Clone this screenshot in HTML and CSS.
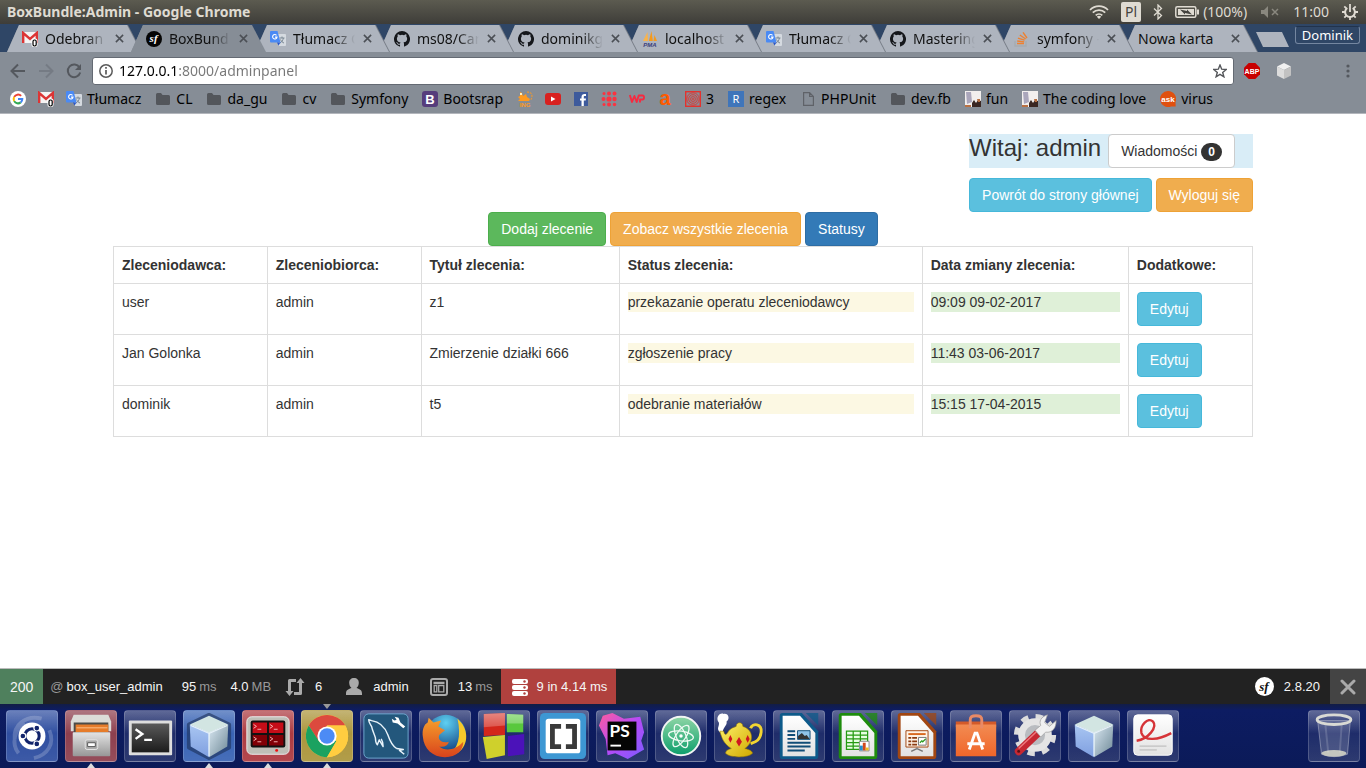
FILE: index.html
```html
<!DOCTYPE html>
<html lang="pl">
<head>
<meta charset="utf-8">
<title>BoxBundle:Admin</title>
<link rel="stylesheet" href="styles.css">
</head>
<body>
<svg class="defs" aria-hidden="true">
  <defs>
    <linearGradient id="gloss" x1="0" y1="0" x2="0" y2="1"><stop offset="0" stop-color="#fff" stop-opacity=".45"/><stop offset="1" stop-color="#fff" stop-opacity="0"/></linearGradient>
    <linearGradient id="metal" x1="0" y1="0" x2="0" y2="1"><stop offset="0" stop-color="#e4e4e4"/><stop offset="1" stop-color="#979797"/></linearGradient>
    <linearGradient id="dark" x1="0" y1="0" x2="0" y2="1"><stop offset="0" stop-color="#5a5a5a"/><stop offset="1" stop-color="#1c1c1c"/></linearGradient>
    <linearGradient id="gold" x1="0" y1="0" x2="1" y2="1"><stop offset="0" stop-color="#fff36a"/><stop offset="1" stop-color="#d0a800"/></linearGradient>
    <linearGradient id="paper" x1="0" y1="0" x2="0" y2="1"><stop offset="0" stop-color="#fff"/><stop offset="1" stop-color="#e2e2e2"/></linearGradient>
    <linearGradient id="atomg" x1="0" y1="0" x2="0" y2="1"><stop offset="0" stop-color="#8ed6a5"/><stop offset="1" stop-color="#0c9e6b"/></linearGradient>
    <linearGradient id="cubeL" x1="0" y1="0" x2="0" y2="1"><stop offset="0" stop-color="#a9c6f2"/><stop offset="1" stop-color="#7f9fe0"/></linearGradient>
    <linearGradient id="cubeR" x1="0" y1="0" x2="1" y2="1"><stop offset="0" stop-color="#dbe9f3"/><stop offset="1" stop-color="#6c8795"/></linearGradient>
    <linearGradient id="ps" x1="0" y1="0" x2="1" y2="1"><stop offset="0" stop-color="#ff5c9c"/><stop offset=".5" stop-color="#b74af7"/><stop offset="1" stop-color="#7b5cff"/></linearGradient>
    <linearGradient id="fox" x1="0" y1="0" x2="0" y2="1"><stop offset="0" stop-color="#f6a12c"/><stop offset="1" stop-color="#d9431c"/></linearGradient>
    <radialGradient id="globe" cx=".5" cy=".2" r=".8"><stop offset="0" stop-color="#5ed0f2"/><stop offset="1" stop-color="#0b3578"/></radialGradient>
    <linearGradient id="bag" x1="0" y1="0" x2="0" y2="1"><stop offset="0" stop-color="#f28b52"/><stop offset="1" stop-color="#f0662a"/></linearGradient>
    <symbol id="i-gmail" viewBox="0 0 16 16"><path fill="#f4f4f4" d="M0 1h16v11H0z"/><path fill="none" stroke="#dc3535" stroke-width="2.4" d="M1.2 12V2l6.8 6 6.8-6v10"/><rect x="9.5" y="7.5" width="6" height="8.5" rx="2" fill="#fff"/><rect x="11" y="9" width="3.2" height="6" rx="1.4" fill="none" stroke="#000" stroke-width="1.2"/></symbol>
    <symbol id="i-sf" viewBox="0 0 16 16"><circle cx="8" cy="8" r="8" fill="#050505"/><text x="7.6" y="11.4" text-anchor="middle" class="sf-mark" fill="#fff">sf</text></symbol>
    <symbol id="i-tr" viewBox="0 0 16 16"><path fill="#d5dae0" d="M7 3h8a1 1 0 0 1 1 1v10a1 1 0 0 1-1 1H9z"/><path fill="none" stroke="#7b8894" d="M9.5 7h5M12 5.5V7M10 12c2-1 3-3 3.400-5M10.500 8.500c1 2 2 3 3.500 3.500"/><path fill="#4a8af4" d="M1 0h6.500l3 11.500H1a1 1 0 0 1-1-1V1a1 1 0 0 1 1-1z"/><path fill="#2956c8" d="M7 11.500h3.500L8.500 14.500z"/><path fill="none" stroke="#fff" stroke-width="1.100" d="M6.500 4.300a2.200 2.200 0 1 0 .5 1.800H5"/></symbol>
    <symbol id="i-gh" viewBox="0 0 16 16"><path fill="#15171b" d="M8 0a8 8 0 0 0-2.530 15.590c.4.070.550-.170.550-.380v-1.490c-2.230.480-2.700-.950-2.700-.950-.360-.920-.890-1.170-.890-1.170-.730-.5.050-.490.050-.490.810.060 1.230.830 1.230.830.720 1.230 1.880.870 2.340.670.070-.520.280-.880.510-1.080-1.780-.2-3.640-.890-3.640-3.950 0-.870.310-1.590.820-2.150-.080-.2-.360-1.020.080-2.120 0 0 .670-.210 2.200.820a7.600 7.600 0 0 1 4 0c1.530-1.040 2.200-.820 2.200-.820.440 1.100.160 1.920.080 2.120.510.560.820 1.270.820 2.150 0 3.070-1.870 3.750-3.650 3.950.290.250.540.730.540 1.480v2.200c0 .210.150.460.550.380A8 8 0 0 0 8 0z"/></symbol>
    <symbol id="i-pma" viewBox="0 0 16 16"><path fill="#f9b34c" d="M5.500 1 1 10h5z"/><path fill="#f59a1c" d="M9.500 0 6.800 10h4zM12.500 4l-1 6H15z"/><text x="8" y="15.500" text-anchor="middle" class="pma-mark" fill="#3b3d7a">PMA</text></symbol>
    <symbol id="i-so" viewBox="0 0 16 16"><path fill="none" stroke="#a6abb0" stroke-width="1.300" d="M1 10v5h11v-5"/><path fill="none" stroke="#ee8130" stroke-width="1.400" d="M3 12.500h7M3.200 10l7 .9M3.900 7.100l6.700 2.100M5.800 4l5.900 4M9 1.300l4 5.700"/></symbol>
    <symbol id="i-folder" viewBox="0 0 16 16"><path fill="#53565b" d="M1 3.500A1.500 1.500 0 0 1 2.500 2H6l1.500 2h6A1.500 1.500 0 0 1 15 5.500v7a1.500 1.500 0 0 1-1.500 1.500h-11A1.500 1.500 0 0 1 1 12.500z"/></symbol>
    <symbol id="i-photo" viewBox="0 0 16 16"><path fill="#f2efee" d="M0 0h16v16H0z"/><path fill="#aaa6bb" d="M1 1h5l1 10-5 2z"/><path fill="#3a2723" d="M7 12l2-3 2 3 2-3 3 1v6H7z"/><path fill="#b97042" d="M0 14h6v2H0zM12 8h3v3h-2z"/></symbol>
    <symbol id="i-cube" viewBox="0 0 52 52"><path fill="#d2e5e2" d="M26 5 46 14 26 23 6 14z"/><path fill="url(#cubeL)" d="M6 14l20 9v25L7 37z"/><path fill="url(#cubeR)" d="M46 14 26 23v25l19-11z"/><path fill="none" stroke="#f3fbff" stroke-width="1.500" opacity=".8" d="M7 15l19 8 19-8M26 23v24"/></symbol>
    <symbol id="i-doc" viewBox="0 0 52 52"><path fill="currentColor" d="M9 2h20l17 19v26a3 3 0 0 1-3 3H9a3 3 0 0 1-3-3V5a3 3 0 0 1 3-3z"/><path fill="currentColor" opacity=".75" d="M33 2h13v13z"/><path fill="url(#paper)" d="M9 5h18l16 18v24H9z"/></symbol>
    <symbol id="i-close" viewBox="0 0 10 10"><path d="M1 1l8 8M9 1L1 9" stroke="#4b4f55" stroke-width="1.700" fill="none"/></symbol>
  </defs>
</svg>

<header class="titlebar">
  <span class="window-title">BoxBundle:Admin - Google Chrome</span>
  <div class="tray">
    <svg class="wifi" width="20" height="16" viewBox="0 0 20 16" fill="none" stroke="#dfdbd2" stroke-width="1.700"><path d="M1 6a12.500 12.500 0 0 1 18 0M3.800 8.700a8.600 8.600 0 0 1 12.400 0M6.700 11.300a4.800 4.800 0 0 1 6.600 0"/><path fill="#dfdbd2" stroke="none" d="M10 15l-2.200-2.300a3.200 3.200 0 0 1 4.400 0z"/></svg>
    <span class="layout">Pl</span>
    <svg class="bt" width="10" height="16" viewBox="0 0 10 16" fill="none" stroke="#dfdbd2" stroke-width="1.300"><path d="M1 4.500l7.500 7L5 15V1l3.500 3.500-7.500 7"/></svg>
    <svg class="battery" width="24" height="12" viewBox="0 0 24 12"><rect x=".8" y=".8" width="20" height="10.400" rx="1.500" fill="none" stroke="#dfdbd2" stroke-width="1.500"/><path fill="#dfdbd2" d="M3 3h16v6H3zM22 3.500h2v5h-2z"/><path fill="#44433e" d="M5 3.500l7 1.500v-1.500l5 5-7-1.500v1.500z"/></svg>
    <span class="percent">(100%)</span>
    <svg class="mute" width="18" height="12" viewBox="0 0 18 12"><path fill="#8a887f" d="M0 4h3l4-4v12L3 8H0z"/><path stroke="#8a887f" stroke-width="1.500" d="M11 3l6 6M17 3l-6 6"/></svg>
    <span class="clock">11:00</span>
    <svg class="power" width="16" height="16" viewBox="0 0 16 16" fill="none" stroke="#dfdbd2"><path stroke-width="2" d="M5.300 4a4.900 4.900 0 1 0 5.400 0"/><path stroke-width="1.800" d="M8 0v8M8 13v3M0 8h3M13 8h3M2.300 13.700l2-2M13.700 13.700l-2-2M2.300 2.300l2 2M13.700 2.300l-2 2"/></svg>
  </div>
</header>

<nav class="tabs" aria-label="Karty">
  <div class="tab"><svg class="ico"><use href="#i-gmail"/></svg><span class="tab-title">Odebran</span><button class="close" aria-label="Zamknij"><svg><use href="#i-close"/></svg></button></div>
  <div class="tab active"><svg class="ico"><use href="#i-sf"/></svg><span class="tab-title">BoxBund</span><button class="close" aria-label="Zamknij"><svg><use href="#i-close"/></svg></button></div>
  <div class="tab"><svg class="ico"><use href="#i-tr"/></svg><span class="tab-title">Tłumacz G</span><button class="close" aria-label="Zamknij"><svg><use href="#i-close"/></svg></button></div>
  <div class="tab"><svg class="ico"><use href="#i-gh"/></svg><span class="tab-title">ms08/Car</span><button class="close" aria-label="Zamknij"><svg><use href="#i-close"/></svg></button></div>
  <div class="tab"><svg class="ico"><use href="#i-gh"/></svg><span class="tab-title">dominikg</span><button class="close" aria-label="Zamknij"><svg><use href="#i-close"/></svg></button></div>
  <div class="tab"><svg class="ico"><use href="#i-pma"/></svg><span class="tab-title">localhost</span><button class="close" aria-label="Zamknij"><svg><use href="#i-close"/></svg></button></div>
  <div class="tab"><svg class="ico"><use href="#i-tr"/></svg><span class="tab-title">Tłumacz G</span><button class="close" aria-label="Zamknij"><svg><use href="#i-close"/></svg></button></div>
  <div class="tab"><svg class="ico"><use href="#i-gh"/></svg><span class="tab-title">Mastering</span><button class="close" aria-label="Zamknij"><svg><use href="#i-close"/></svg></button></div>
  <div class="tab"><svg class="ico"><use href="#i-so"/></svg><span class="tab-title">symfony -</span><button class="close" aria-label="Zamknij"><svg><use href="#i-close"/></svg></button></div>
  <div class="tab"><span class="tab-title full">Nowa karta</span><button class="close" aria-label="Zamknij"><svg><use href="#i-close"/></svg></button></div>
  <button class="new-tab" aria-label="Nowa karta"></button>
  <button class="profile">Dominik</button>
</nav>

<div class="toolbar">
  <button class="nav-btn" aria-label="Wstecz"><svg width="16" height="16" viewBox="0 0 16 16" fill="none" stroke="#54585e" stroke-width="2"><path d="M15 8H2M8 1.500L1.500 8 8 14.500"/></svg></button>
  <button class="nav-btn" aria-label="Dalej"><svg width="16" height="16" viewBox="0 0 16 16" fill="none" stroke="#757b84" stroke-width="2"><path d="M1 8h13M8 1.500L14.500 8 8 14.500"/></svg></button>
  <button class="nav-btn" aria-label="Odśwież"><svg width="16" height="16" viewBox="0 0 16 16"><path fill="none" stroke="#54585e" stroke-width="2" d="M13.500 4.500A6.300 6.300 0 1 0 14.200 9.500"/><path fill="#54585e" d="M15 1v6H9z"/></svg></button>
  <div class="omnibox">
    <svg width="14" height="14" viewBox="0 0 14 14"><circle cx="7" cy="7" r="6.200" fill="none" stroke="#5b5b5b" stroke-width="1.500"/><path stroke="#5b5b5b" stroke-width="1.700" d="M7 6v4.500M7 3v1.800"/></svg>
    <input class="address" type="text" aria-label="Adres" value="127.0.0.1:8000/adminpanel">
    <svg width="14" height="14" viewBox="0 0 14 14" fill="none" stroke="#54565a" stroke-width="1.400"><path d="M7 1l1.700 4.200 4.500.3-3.500 2.900 1.200 4.400L7 10.400l-3.900 2.400 1.200-4.400L.8 5.500l4.500-.3z"/></svg>
  </div>
  <div class="extensions">
    <svg width="16" height="16" viewBox="0 0 16 16"><path fill="#c80000" d="M4.700 0h6.600L16 4.700v6.600L11.300 16H4.700L0 11.300V4.700z"/><text x="8" y="10.700" text-anchor="middle" class="abp-mark" fill="#fff">ABP</text></svg>
    <svg width="16" height="16" viewBox="0 0 16 16"><path fill="#f0f0f0" d="M8 0l7 3.500L8 7 1 3.500z"/><path fill="#dcdcdc" d="M1 3.500L8 7v9l-7-3.500z"/><path fill="#c2c2c2" d="M15 3.500L8 7v9l7-3.500z"/></svg>
  </div>
  <button class="menu-btn" aria-label="Menu"><svg width="4" height="14" viewBox="0 0 4 14" fill="#54585e"><circle cx="2" cy="2" r="1.600"/><circle cx="2" cy="7" r="1.600"/><circle cx="2" cy="12" r="1.600"/></svg></button>
</div>

<nav class="bookmarks" aria-label="Zakładki">
  <a href="#" aria-label="Google"><svg class="ico" viewBox="0 0 16 16"><circle cx="8" cy="8" r="8" fill="#fff"/><g fill="none" stroke-width="2"><path stroke="#ea4335" d="M4.200 5.900a4.300 4.300 0 0 1 6.900-1"/><path stroke="#fbbc05" d="M4.200 5.900a4.300 4.300 0 0 0 0 4.200"/><path stroke="#34a853" d="M4.200 10.100a4.300 4.300 0 0 0 6.500 1.300"/><path stroke="#4285f4" d="M10.700 11.400A4.300 4.300 0 0 0 12.300 8H8"/></g></svg></a>
  <a href="#" aria-label="Gmail"><svg class="ico"><use href="#i-gmail"/></svg></a>
  <a class="named" href="#"><svg class="ico"><use href="#i-tr"/></svg>Tłumacz</a>
  <a class="named" href="#"><svg class="ico"><use href="#i-folder"/></svg>CL</a>
  <a class="named" href="#"><svg class="ico"><use href="#i-folder"/></svg>da_gu</a>
  <a class="named" href="#"><svg class="ico"><use href="#i-folder"/></svg>cv</a>
  <a class="named" href="#"><svg class="ico"><use href="#i-folder"/></svg>Symfony</a>
  <a class="named" href="#"><svg class="ico" viewBox="0 0 16 16"><rect width="16" height="16" rx="3" fill="#563d7c"/><text x="8" y="12.500" text-anchor="middle" class="mark-bold" fill="#fff">B</text></svg>Bootsrap</a>
  <a href="#" aria-label="ING"><svg class="ico" viewBox="0 0 16 16"><path fill="#ff9a1f" d="M3 1l2 1 1 3 3-2 1 3 3 2-1 2H1l2-2-2-2 2-1z"/><path fill="none" stroke="#ff9a1f" stroke-dasharray="2 1" d="M10 1c4 0 5 2 5 4s-1 3-1 4"/><path fill="#fff0c0" d="M3 2h2v2H3z"/><text x="8" y="15.800" text-anchor="middle" class="tiny-mark" fill="#ff9a1f">ING</text></svg></a>
  <a href="#" aria-label="YouTube"><svg class="ico" viewBox="0 0 16 16"><rect y="2" width="16" height="12" rx="3" fill="#d8201f"/><path fill="#fff" d="M6 5.500v5L10.500 8z"/></svg></a>
  <a href="#" aria-label="Facebook"><svg class="ico" viewBox="0 0 16 16"><rect x="1" y="1" width="14" height="14" fill="#3d5a9c"/><path fill="#fff" d="M8.500 15V9.500H7v-2h1.500V6c0-2 1.200-3 3-3H13v2h-1.200c-.8 0-1 .4-1 1v1.500H13l-.3 2h-1.900V15z"/></svg></a>
  <a href="#" aria-label="Kropki"><svg class="ico" viewBox="0 0 16 16" fill="#fb3340"><circle cx="3" cy="2.500" r="1.500"/><circle cx="8" cy="2.500" r="2"/><circle cx="13.500" cy="2.500" r="2"/><circle cx="2.500" cy="8" r="2"/><circle cx="8" cy="8" r="2.600"/><circle cx="13.500" cy="8" r="2.200"/><circle cx="3" cy="13.500" r="1.500"/><circle cx="8" cy="13.500" r="2"/><circle cx="13.500" cy="13.500" r="1.700"/></svg></a>
  <a href="#" aria-label="WP"><svg class="ico" viewBox="0 0 16 16" fill="none" stroke="#f7293f" stroke-width="1.900" stroke-linejoin="round"><path d="M.8 4l2.200 7 2.400-6 2.300 6 2-6.500h3.800c2 0 2 4 0 4H11v3"/></svg></a>
  <a href="#" aria-label="Allegro"><svg class="ico" viewBox="0 0 16 16"><text x="8" y="14" text-anchor="middle" class="a-mark" fill="#ff5a00">a</text></svg></a>
  <a class="named" href="#"><svg class="ico" viewBox="0 0 16 16" fill="none" stroke="#e3322e" stroke-width=".9"><rect x=".7" y=".7" width="14.600" height="14.600" stroke-width="1.400"/><circle cx="8" cy="8" r="6.200"/><circle cx="8" cy="8" r="4.300"/><circle cx="8" cy="8" r="2.400"/><circle cx="8" cy="8" r=".6"/></svg>3</a>
  <a class="named" href="#"><svg class="ico" viewBox="0 0 16 16"><rect width="16" height="16" fill="#3f75ba"/><text x="8" y="12" text-anchor="middle" class="mark-light" fill="#fff">R</text></svg>regex</a>
  <a class="named" href="#"><svg class="ico" viewBox="0 0 16 16" fill="none" stroke="#5f6268" stroke-width="1.200"><path d="M3.600 1.600h6l3.800 3.800v9H3.600zM9.600 1.600v3.800h3.800"/></svg>PHPUnit</a>
  <a class="named" href="#"><svg class="ico"><use href="#i-folder"/></svg>dev.fb</a>
  <a class="named" href="#"><svg class="ico"><use href="#i-photo"/></svg>fun</a>
  <a class="named" href="#"><svg class="ico"><use href="#i-photo"/></svg>The coding love</a>
  <a class="named" href="#"><svg class="ico" viewBox="0 0 16 16"><path fill="#e0500f" d="M8 0a8 8 0 0 1 7.500 11l.2 4.500-4.700-.1A8 8 0 1 1 8 0z"/><text x="8" y="10.500" text-anchor="middle" class="ask-mark" fill="#fff">ask</text></svg>virus</a>
</nav>

<main class="page">
  <div class="container">
    <div class="user-row">
      <div class="user-box">
        <div class="greeting">Witaj: admin <a class="btn btn-default" href="#">Wiadomości <span class="badge">0</span></a></div>
        <div class="user-actions"><a class="btn btn-info" href="#">Powrót do strony głównej</a> <a class="btn btn-warning" href="#">Wyloguj się</a></div>
      </div>
    </div>
    <div class="actions">
      <a class="btn btn-success" href="#">Dodaj zlecenie</a>
      <a class="btn btn-warning" href="#">Zobacz wszystkie zlecenia</a>
      <a class="btn btn-primary" href="#">Statusy</a>
    </div>
    <table class="orders">
      <colgroup><col class="c-from"><col class="c-to"><col class="c-title"><col class="c-status"><col class="c-date"><col class="c-extra"></colgroup>
      <thead>
        <tr><th>Zleceniodawca:</th><th>Zleceniobiorca:</th><th>Tytuł zlecenia:</th><th>Status zlecenia:</th><th>Data zmiany zlecenia:</th><th>Dodatkowe:</th></tr>
      </thead>
      <tbody>
        <tr><td>user</td><td>admin</td><td>z1</td><td><p class="bg-warning">przekazanie operatu zleceniodawcy</p></td><td><p class="bg-success">09:09 09-02-2017</p></td><td><a class="btn btn-info" href="#">Edytuj</a></td></tr>
        <tr><td>Jan Golonka</td><td>admin</td><td>Zmierzenie działki 666</td><td><p class="bg-warning">zgłoszenie pracy</p></td><td><p class="bg-success">11:43 03-06-2017</p></td><td><a class="btn btn-info" href="#">Edytuj</a></td></tr>
        <tr><td>dominik</td><td>admin</td><td>t5</td><td><p class="bg-warning">odebranie materiałów</p></td><td><p class="bg-success">15:15 17-04-2015</p></td><td><a class="btn btn-info" href="#">Edytuj</a></td></tr>
      </tbody>
    </table>
  </div>
</main>

<footer class="debugbar">
  <a class="dbg status" href="#">200</a>
  <a class="dbg route" href="#"><i>@</i> box_user_admin</a>
  <a class="dbg time" href="#">95 <i>ms</i></a>
  <a class="dbg memory" href="#">4.0 <i>MB</i></a>
  <a class="dbg ajax" href="#"><svg width="20" height="20" viewBox="0 0 20 20"><path fill="none" stroke="#aaa" stroke-width="3" stroke-linejoin="round" d="M11 3.500H4.500V15M9 16.500h6.500V5"/><path fill="#aaa" d="M.5 14h8l-4 5zM11.500 6h8l-4-5z"/></svg>6</a>
  <a class="dbg user" href="#"><svg width="20" height="20" viewBox="0 0 20 20" fill="#aaa"><path d="M10 1c3 0 5 2 4.800 5-.1 2-1 4-2.300 5 2.500 1 5.500 1.500 5.500 5.500V18H2v-1.500C2 12.500 5 12 7.500 11c-1.300-1-2.200-3-2.300-5C5 3 7 1 10 1z"/></svg>admin</a>
  <a class="dbg twig" href="#"><svg width="20" height="20" viewBox="0 0 20 20" fill="none" stroke="#aaa"><rect x="2" y="2" width="16" height="16" rx="2" stroke-width="2"/><path stroke-width="2.500" d="M4.500 6h11"/><path stroke-width="1.300" d="M5.200 8.700h2.600v6.100H5.200zM9.700 8.700h5.100v6.100H9.700z"/></svg>13 <i>ms</i></a>
  <a class="dbg db" href="#"><svg width="18" height="18" viewBox="0 0 18 18"><g fill="#fff"><rect x="1" y="1" width="16" height="5" rx="2"/><rect x="1" y="7" width="16" height="5" rx="2"/><rect x="1" y="13" width="16" height="5" rx="2"/></g><g fill="#b0413e"><circle cx="13.500" cy="3.500" r="1.200"/><circle cx="13.500" cy="9.500" r="1.200"/><circle cx="13.500" cy="15.500" r="1.200"/></g></svg>9 in 4.14 ms</a>
  <a class="dbg version" href="#"><svg width="19" height="19" viewBox="0 0 16 16"><circle cx="8" cy="8" r="8" fill="#fff"/><text x="7.600" y="11.400" text-anchor="middle" class="sf-mark" fill="#111">sf</text></svg>2.8.20</a>
  <button class="hide-bar" aria-label="Zamknij pasek"><svg width="16" height="16" viewBox="0 0 16 16"><path d="M2 2l12 12M14 2L2 14" stroke="#aaa" stroke-width="3" stroke-linecap="round"/></svg></button>
</footer>

<nav class="dock" aria-label="Programy">
  <button class="app blue" aria-label="Ubuntu"><svg viewBox="0 0 52 52"><g fill="none" stroke="#fff" stroke-width="4" opacity=".2"><path d="M8 30C6 14 20 4 36 8M44 20c6 14-2 26-16 29M12 44C4 34 8 20 18 12"/></g><circle cx="26" cy="26" r="14" fill="#fff"/><circle cx="26" cy="26" r="7.500" fill="none" stroke="#12246b" stroke-width="3.200"/><g fill="#12246b" stroke="#fff" stroke-width="1.200"><circle cx="16.500" cy="26" r="3"/><circle cx="31" cy="17.800" r="3"/><circle cx="31" cy="34.200" r="3"/></g></svg></button>
  <button class="app red running" aria-label="Pliki"><svg viewBox="0 0 52 52"><path fill="#dcdcd8" d="M8 4h36l3 7v10H5V11z"/><path fill="#4c4c48" d="M8 12h36v12H8z"/><path fill="#e67c2a" d="M10 14h34v8H10z"/><path fill="#ffc28a" d="M11 17h32v1H11z"/><rect x="7" y="22" width="39" height="25" rx="1" fill="url(#metal)"/><rect x="20" y="30" width="13" height="10" rx="2" fill="#aaa" stroke="#e8e8e8"/><path fill="#fff" stroke="#555" d="M22.500 33h8v4h-8z"/></svg></button>
  <button class="app" aria-label="Terminal"><svg viewBox="0 0 52 52"><rect x="4" y="10" width="45" height="36" rx="1" fill="#dedede"/><rect x="7" y="13" width="39" height="30" fill="url(#dark)"/><path fill="none" stroke="#fff" stroke-width="2.500" d="M11 19l7 5-7 5M20 30h8"/></svg></button>
  <button class="app azure running" aria-label="VirtualBox"><svg viewBox="0 0 52 52"><path fill="#1c3058" stroke="#1c3058" stroke-width="4" stroke-linejoin="round" opacity=".6" d="M26 4 47 14v24L26 49 5 38V14z"/><use href="#i-cube"/></svg></button>
  <button class="app crimson running" aria-label="Terminator"><svg viewBox="0 0 52 52"><rect x="4" y="6" width="44" height="39" rx="5" fill="#bfbfb7" stroke="#eee"/><rect x="8" y="10" width="36" height="28" rx="2" fill="#111"/><path fill="#c60d18" d="M10 12h15v11H10zM27 12h15v11H27z"/><path fill="#810006" d="M10 25h15v11H10zM27 25h15v11H27z"/><path fill="none" stroke="#f5b3b3" d="M11 14l3 2-3 2M15 19h4M28 14l3 2-3 2M32 19h4M11 27l3 2-3 2M15 32h4M28 27l3 2-3 2M32 32h4"/><circle cx="35" cy="41" r="1.500" fill="#e11"/></svg></button>
  <button class="app yellow running current" aria-label="Chrome"><svg viewBox="0 0 52 52"><circle cx="26" cy="26" r="22" fill="#ffcd40"/><path fill="#dc4a3e" d="M45 15A22 22 0 0 0 7 15l10 16 9-16z"/><path fill="#1ba260" d="M7 15a22 22 0 0 0 19 33l10-17-18 1z"/><path fill="#ffcd40" d="M45 15H26l10 16-10 17a22 22 0 0 0 19-33z"/><circle cx="26" cy="26" r="10" fill="#fff"/><circle cx="26" cy="26" r="8" fill="#4c8bf5"/></svg></button>
  <button class="app" aria-label="MySQL Workbench"><svg viewBox="0 0 52 52"><rect x="3" y="3" width="46" height="46" rx="5" fill="#23577c" stroke="#6faad0"/><path fill="none" stroke="#e8f3fa" stroke-width="1.500" stroke-linejoin="round" d="M37 39c-5-3-7-8-9-14-3-8-9-14-17-15l-3-1c0 3 2 5 3 7 1 5 3 8 4 12 0 3 0 5 2 7l2-5 4 7c0-3 0-5-2-8M37 39l7 1-4 1 5 4"/><path fill="#fff" d="M35 6l4 1 2 5 5 4-2 2-6-5-5-1-1-4 3 2 2-1z"/></svg></button>
  <button class="app" aria-label="Firefox"><svg viewBox="0 0 52 52"><circle cx="27" cy="25" r="21" fill="url(#globe)"/><path fill="#f8c92b" d="M39 8c12 10 12 27 1 35-4 3-9 4-12 4 12-7 15-21 11-39z"/><path fill="url(#fox)" d="M3 27C2 20 4 14 8 12l1-5 5 5 8-2-3 6 7 4-6 5c-2 5 3 9 10 7-1 4-5 6-10 5 6 5 17 4 25-5 0 9-7 16-19 16C13 48 4 39 3 27z"/></svg></button>
  <button class="app" aria-label="Bloki"><svg viewBox="0 0 52 52"><path fill="#d3261b" d="M5 3l22-1v23L5 26z"/><path fill="#59c83d" d="M29 3l17 1v18H29z"/><path fill="#cfd02c" d="M4 27l23-2v21L8 50z"/><path fill="#4b12b9" d="M30 26l17-2v21l-17 2z"/><path fill="url(#gloss)" d="M5 3l22-1v13L5 17zM29 3l17 1v9H29zM4 27l23-2-1 4-17 2z"/></svg></button>
  <button class="app" aria-label="Brackets"><svg viewBox="0 0 52 52"><rect x="2" y="2" width="48" height="48" rx="5" fill="#3d97d3"/><rect x="8" y="8" width="36" height="36" rx="3" fill="#fff"/><path fill="none" stroke="#3a3a3a" stroke-width="5" d="M24 16h-9v21h9M29 16h9v21h-9"/></svg></button>
  <button class="app" aria-label="PhpStorm"><svg viewBox="0 0 52 52"><path fill="url(#ps)" d="M6 5l10-3 12 6 17-2 4 16-3 9 3 9-17 10-13-6-8 2-2-17-7-14z"/><path fill="#050505" d="M11 11h30v30H11z"/><text x="13" y="27" class="ps-mark" fill="#fff">PS</text><path fill="#fff" d="M14 35h11v2H14z"/></svg></button>
  <button class="app" aria-label="Atom"><svg viewBox="0 0 52 52"><circle cx="26" cy="26" r="20" fill="url(#atomg)" stroke="#f2f5f3" stroke-width="2"/><g fill="none" stroke="#eefaf3" stroke-width="1.300"><ellipse cx="26" cy="26" rx="13" ry="5" transform="rotate(8 26 26)"/><ellipse cx="26" cy="26" rx="13" ry="5" transform="rotate(66 26 26)"/><ellipse cx="26" cy="26" rx="13" ry="5" transform="rotate(124 26 26)"/></g><circle cx="26" cy="26" r="1.800" fill="#fff"/></svg></button>
  <button class="app" aria-label="Czajnik"><svg viewBox="0 0 52 52"><path fill="#fff" d="M5 22c-4-4 0-6-1-10-4-5 1-11 5-9 5-1 7 5 3 8 1 4-3 5-4 11z"/><path fill="none" stroke="#f2d432" stroke-width="3" d="M37 18c2-6 12-5 11 4s-6 10-11 12"/><path fill="url(#gold)" stroke="#9b7a00" stroke-width=".6" d="M5 21h4c1 4 2 4 4 2 1-4 6-6 9-7 0-5 7-5 7 0 6 2 9 6 9 11 0 6-4 10-7 12 5 1 8 3 8 5-4 5-24 5-28 0 0-3 3-4 6-5C9 34 7 28 5 21z"/><path fill="#cf1720" d="M16 25l2 4-2 4-2-4zM25 27l3 5-3 5-3-5zM34 25l2 4-2 4-2-4z"/></svg></button>
  <button class="app" aria-label="Writer"><svg viewBox="0 0 52 52" color="#0d5a8a"><use href="#i-doc"/><path stroke="#114d77" stroke-width="2" d="M14 21h8M14 25h8M14 29h8M14 33h24M14 37h24M14 41h18"/><path fill="#8fc3e8" stroke="#114d77" d="M24.500 20.500h13v9h-13z"/><path fill="#333" d="M25 29v-3l4-3 3 3 2-1 3 4z"/></svg></button>
  <button class="app" aria-label="Calc"><svg viewBox="0 0 52 52" color="#1e8c0d"><use href="#i-doc"/><path fill="#e8ffe2" stroke="#259a12" stroke-width="1.300" d="M14 21h22v19H14zM14 25h22M14 29h22M14 33h22M14 36.500h22M21 21v19M28.500 21v19"/><path fill="#fff" stroke="#888" d="M27.500 31.500h10v10h-10z"/><path fill="#2490d0" d="M28 36h3v5h-3z"/><path fill="#d14a1c" d="M31 33h3v8h-3z"/><path fill="#eebb1c" d="M34 38h3v3h-3z"/></svg></button>
  <button class="app" aria-label="Impress"><svg viewBox="0 0 52 52" color="#a24712"><use href="#i-doc"/><path fill="#fff4e8" stroke="#a24712" d="M14.500 20.500h23v17h-23z"/><path fill="#d9691f" d="M17 23h18v2H17z"/><path stroke="#8a3b10" stroke-width="1.800" stroke-dasharray="3 1 5 1" d="M17 28h9M17 31.500h9M17 35h9"/><path fill="#fff" stroke="#777" d="M27.500 27.500h8v8h-8z"/><path fill="none" stroke="#2a9c1d" stroke-width="1.300" d="M29 33l2-2 1 1 3-3"/><path fill="none" stroke="#777" stroke-width="1.500" d="M26 38v2M20 42l6-3 6 3"/></svg></button>
  <button class="app" aria-label="Centrum oprogramowania"><svg viewBox="0 0 52 52"><path fill="#d35a2a" d="M5 11h42v6H5z"/><path fill="url(#bag)" d="M5 14h42v33H5z"/><path fill="none" stroke="#e98a66" stroke-width="3" d="M20 18V9q0-4 6-4t6 4v9"/><path fill="none" stroke="#fff" stroke-width="3" d="M19 40l6-17h2l6 17M17 34h18"/></svg></button>
  <button class="app" aria-label="Ustawienia"><svg viewBox="0 0 52 52"><circle cx="26" cy="25" r="18" fill="none" stroke="#dcdcdc" stroke-width="8" stroke-dasharray="7.070 7.070"/><circle cx="26" cy="25" r="14" fill="#b9bcc0" stroke="#e4e4e4" stroke-width="7"/><path stroke="#c62832" stroke-width="8" stroke-linecap="round" d="M9 42l20-19"/><path stroke="#ee7a7e" stroke-width="1.500" d="M9 39l19-18"/><path fill="#f1f1f1" stroke="#999" stroke-width=".7" d="M26 20l6 7 5-5c7 1 11-4 11-12l-7 6-5-4 3-8c-7 2-9 7-7 11z"/><circle cx="9" cy="42" r="1.500" fill="#561015"/></svg></button>
  <button class="app" aria-label="VirtualBox"><svg><use href="#i-cube"/></svg></button>
  <button class="app" aria-label="Czytnik dokumentów"><svg viewBox="0 0 52 52"><rect x="6" y="4" width="40" height="42" rx="4" fill="url(#paper)" stroke="#fff"/><path fill="none" stroke="#d63438" stroke-width="2.500" d="M9 31c12-2 22-14 17-20-5-5-14 4-12 12 3 9 18 7 31 0"/><path stroke="#b5b5b5" d="M12 36.500h28M12 40.500h18"/></svg></button>
  <button class="app trash" aria-label="Kosz"><svg viewBox="0 0 52 52"><path fill="#fff" fill-opacity=".16" stroke="#fff" stroke-opacity=".35" d="M9 10l4 35q13 5 27 0l3-35z"/><ellipse cx="26" cy="44" rx="13" ry="3.500" fill="#c4c6bf"/><path stroke="#fff" opacity=".15" stroke-width="2" d="M17 14l3 29M34 14l-2 29"/><ellipse cx="26" cy="9" rx="17.500" ry="5" fill="none" stroke="#d9dad4" stroke-width="3"/></svg></button>
</nav>
</body>
</html>
```

FILE: styles.css
```css
* { box-sizing: border-box; }

body {
  margin: 0;
  min-height: 100vh;
  display: flex;
  flex-direction: column;
  background: #fff;
  color: #333;
  font: 14px/20px "Liberation Sans", Arial, sans-serif;
}

button { border: 0; padding: 0; background: none; font: inherit; }
a { color: inherit; text-decoration: none; }
.defs { position: absolute; width: 0; height: 0; }
.ico { width: 16px; height: 16px; flex: none; }

.sf-mark { font: italic bold 11px "Liberation Serif", serif; }
.pma-mark { font: italic bold 6px "Liberation Sans", sans-serif; }
.tiny-mark { font: bold 6px "Liberation Sans", sans-serif; }
.abp-mark { font: bold 7px "Liberation Sans", sans-serif; }
.ask-mark { font: bold 8px "Liberation Sans", sans-serif; }
.mark-bold { font: bold 13px "Liberation Sans", sans-serif; }
.mark-light { font: 11px "Noto Sans", sans-serif; }
.a-mark { font: bold 20px "Liberation Sans", sans-serif; }
.ps-mark { font: bold 18px Lato, sans-serif; }

/* Desktop panel */
.titlebar {
  height: 24px;
  padding: 0 8px 0 7px;
  display: flex;
  align-items: center;
  justify-content: space-between;
  background: linear-gradient(#5c5b50, #3e3d39);
  color: #dfdbd2;
  font: 14px/24px "Noto Sans", sans-serif;
}
.window-title { font-weight: bold; }
.tray { display: flex; align-items: center; }
.layout {
  width: 20px;
  margin: 0 12px;
  border-radius: 2px;
  background: #dfdbd2;
  color: #45443f;
  line-height: 20px;
  text-align: center;
}
.battery { margin: 0 4px 0 12px; }
.mute { margin: 0 14px; }
.power { margin-left: 13px; }

/* Tab strip */
.tabs {
  height: 28px;
  padding: 1px 6px 0 7px;
  display: flex;
  align-items: stretch;
  background: #2f4666;
  color: #101010;
  font: 14px/26px "Noto Sans", sans-serif;
}
.tab {
  position: relative;
  isolation: isolate;
  flex: 0 1 135px;
  min-width: 0;
  margin-right: -11px;
  padding: 0 18px 0 15px;
  display: flex;
  align-items: center;
  z-index: 1;
}
.tab::before,
.tab::after {
  content: "";
  position: absolute;
  inset: 0;
  z-index: -1;
  clip-path: polygon(0 100%, 12px 0, calc(100% - 14px) 0, 100% 100%);
  background: #777d87;
}
.tab::after {
  inset: 0 1px 0 0;
  background: #aeb4be;
}
.tab.active::before,
.tab.active::after { background: #868d96; }
.tab:nth-child(1) { z-index: 10; }
.tab:nth-child(2) { z-index: 20; }
.tab:nth-child(3) { z-index: 9; }
.tab:nth-child(4) { z-index: 8; }
.tab:nth-child(5) { z-index: 7; }
.tab:nth-child(6) { z-index: 6; }
.tab:nth-child(7) { z-index: 5; }
.tab:nth-child(8) { z-index: 4; }
.tab:nth-child(9) { z-index: 3; }
.tab:nth-child(10) { z-index: 2; }
.tab-title {
  flex: 1;
  min-width: 0;
  margin: 0 8px 0 7px;
  overflow: hidden;
  white-space: nowrap;
  mask-image: linear-gradient(90deg, #000 65%, transparent);
}
.tab-title.full { margin-left: 0; mask-image: none; }
.close { width: 9px; height: 9px; display: flex; }
.close svg { width: 9px; height: 9px; }
.new-tab {
  width: 33px;
  height: 15px;
  margin: 7px 0 0 9px;
  clip-path: polygon(0 0, 26px 0, 100% 100%, 7px 100%);
  background: #aeb4be;
}
.profile {
  height: 18px;
  margin: 1px 0 0 auto;
  padding: 0 6px;
  border: 1px solid #7486a0;
  border-top-color: #22334c;
  border-radius: 3px;
  color: #fff;
  font-size: 13px;
  line-height: 16px;
}

/* Navigation toolbar */
.toolbar {
  height: 33px;
  padding: 5px 16px 0 10px;
  display: flex;
  align-items: center;
  background: #868d96;
}
.nav-btn { width: 16px; height: 16px; margin-right: 12px; display: flex; flex: none; }
.nav-btn:nth-child(3) { margin-right: 10px; }
.omnibox {
  flex: 1;
  height: 28px;
  padding: 0 6px;
  display: flex;
  align-items: center;
  gap: 6px;
  border: 1px solid #646a73;
  border-radius: 3px;
  background: #fff;
}
.address {
  flex: 1;
  min-width: 0;
  padding: 0;
  border: 0;
  outline: 0;
  background: linear-gradient(90deg, #000 60px, #777 60px);
  background-clip: text;
  color: transparent;
  font: 14px/20px "Noto Sans", sans-serif;
}
.extensions { display: flex; gap: 16px; margin: 0 54px 0 10px; }
.menu-btn { display: flex; }

/* Bookmarks */
.bookmarks {
  height: 29px;
  padding: 0 10px;
  display: flex;
  align-items: center;
  gap: 12px;
  overflow: hidden;
  border-bottom: 1px solid #b3b6bc;
  background: #868d96;
  color: #000;
  font: 14px/20px "Noto Sans", sans-serif;
  white-space: nowrap;
}
.bookmarks a { display: flex; align-items: center; gap: 5px; }
.bookmarks .named { padding-right: 2px; }

/* Page */
.page { flex: 1; padding-top: 20px; }
.container { max-width: 1170px; margin: 0 auto; padding: 0 15px; }
.user-row { display: flex; justify-content: flex-end; }
.greeting {
  margin-bottom: 10px;
  background: #d9edf7;
  font-size: 24px;
  line-height: 26px;
  display: flex;
  align-items: baseline;
  gap: 7px;
}
.user-actions,
.actions { display: flex; gap: 4px; }
.actions { justify-content: center; }
.btn {
  display: inline-block;
  padding: 6px 12px;
  border: 1px solid transparent;
  border-radius: 4px;
  color: #fff;
  font-size: 14px;
  line-height: 20px;
  white-space: nowrap;
}
.btn-default { border-color: #ccc; background: #fff; color: #333; }
.btn-info { border-color: #46b8da; background: #5bc0de; }
.btn-warning { border-color: #eea236; background: #f0ad4e; }
.btn-success { border-color: #4cae4c; background: #5cb85c; }
.btn-primary { border-color: #2e6da4; background: #337ab7; }
.badge {
  display: inline-block;
  padding: 3px 7px;
  border-radius: 10px;
  background: #333;
  color: #fff;
  font-size: 12px;
  font-weight: bold;
  line-height: 12px;
  vertical-align: middle;
}
.orders { width: 100%; table-layout: fixed; border-collapse: collapse; }
.orders th,
.orders td {
  padding: 8px;
  border: 1px solid #ddd;
  text-align: left;
  vertical-align: top;
}
.orders p { margin: 0; }
.orders td .btn { display: block; width: max-content; }
.bg-warning { background: #fcf8e3; }
.bg-success { background: #dff0d8; }
.c-from { width: 13.5%; }
.c-to { width: 13.5%; }
.c-title { width: 17.4%; }
.c-status { width: 26.6%; }
.c-date { width: 18.1%; }
.c-extra { width: 10.9%; }

/* Profiler toolbar */
.debugbar {
  height: 36px;
  display: flex;
  align-items: stretch;
  border-top: 1px solid #bbb;
  background: #222;
  color: #f5f5f5;
  font-size: 13px;
}
.dbg { display: flex; align-items: center; gap: 10px; padding: 0 10px; white-space: nowrap; }
.dbg i { color: #999; font-style: normal; }
.status { background: #4f805d; font-size: 14px; }
.route { gap: 3px; padding: 0 9px 0 7px; }
.time, .memory { gap: 3px; padding: 0 4px 0 10px; }
.user { padding: 0 8px 0 12px; gap: 9px; }
.twig { gap: 3px; padding: 0 8px 0 12px; }
.twig svg { margin-right: 6px; }
.db { gap: 8px; padding-right: 9px; background: #b0413e; }
.version { margin-left: auto; }
.hide-bar { width: 36px; display: flex; align-items: center; justify-content: center; background: #444; }

/* Dock */
.dock {
  height: 64px;
  padding: 6px 6px 0;
  display: flex;
  gap: 7px;
  background: linear-gradient(#121d45, #0d1c62 6px, #0b1a58);
}
.app {
  position: relative;
  width: 52px;
  height: 52px;
  flex: 0 1 52px;
  border: 1px solid rgba(255, 255, 255, .18);
  border-radius: 4px;
  background: linear-gradient(rgba(255, 255, 255, .34), rgba(255, 255, 255, .08) 45%, rgba(255, 255, 255, .14));
}
.app svg { display: block; width: 100%; height: 100%; }
.blue { background-color: #1d3f98; }
.red { background-color: #842f3f; }
.azure { background-color: #2856ae; }
.crimson { background-color: #a62a31; }
.yellow { background-color: #a58d2c; }
.running::after,
.current::before {
  content: "";
  position: absolute;
  left: 50%;
  margin-left: -4px;
  border: 4px solid transparent;
}
.running::after { bottom: -7px; border-top: 0; border-bottom: 5px solid #dcdcdc; }
.current::before { top: -7px; border-bottom: 0; border-top: 5px solid #999; }
.trash { margin-left: auto; }
```
